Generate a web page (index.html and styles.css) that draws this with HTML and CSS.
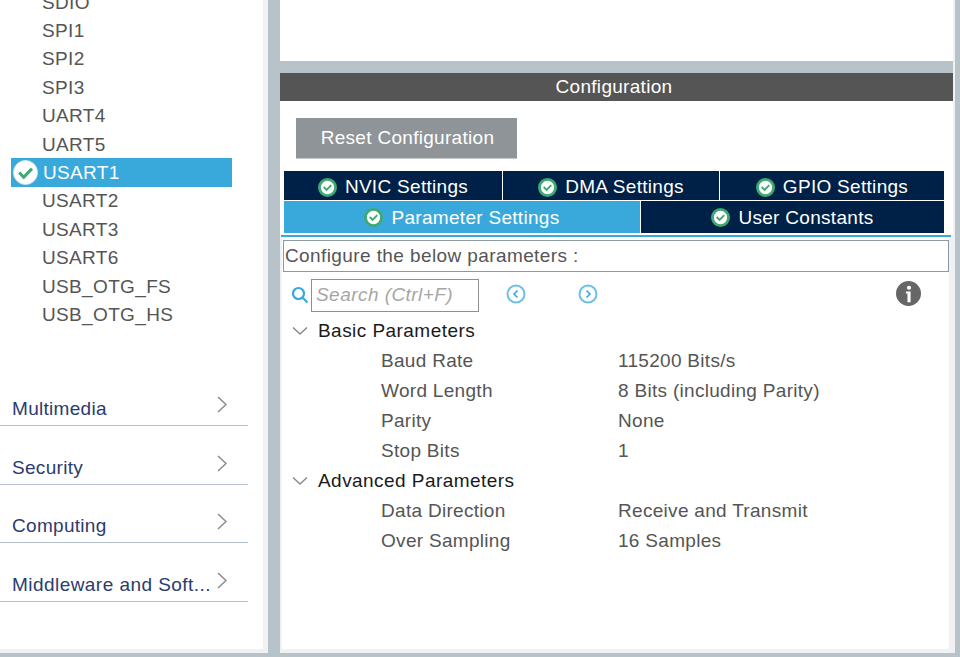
FILE: index.html
```html
<!DOCTYPE html>
<html lang="en">
<head>
    <meta charset="UTF-8">
    <title>Configuration</title>
    <link rel="stylesheet" href="styles.css">
</head>
<body>
<svg class="defs" width="0" height="0">
    <symbol id="ok" viewBox="0 0 20 20">
        <circle cx="10" cy="10" r="8.5" fill="#fff" stroke="#3fa873" stroke-width="3"/>
        <path d="M6 9.5l3 3 5-5" fill="none" stroke="#3fa873" stroke-width="2"/>
    </symbol>
    <symbol id="ok-big" viewBox="0 0 26 26">
        <circle cx="13" cy="13" r="12.5" fill="#fff" stroke="#cfe6dc" stroke-width="1"/>
        <path d="M6.5 13l4.6 5 8.6-9" fill="none" stroke="#3fa873" stroke-width="3.2"/>
    </symbol>
    <symbol id="down" viewBox="0 0 16 10">
        <path d="M1 1.5l7 6.5 7-6.5" fill="none" stroke="#8a8a8a" stroke-width="1.5"/>
    </symbol>
    <symbol id="right" viewBox="0 0 10 17">
        <path d="M1 1l8 7.5-8 7.5" fill="none" stroke="#8a8a8a" stroke-width="1.5"/>
    </symbol>
</svg>

<div class="page">
    <div class="side">
        <div class="side-inner">
            <ul class="periph">
                <li>SDIO</li>
                <li>SPI1</li>
                <li>SPI2</li>
                <li>SPI3</li>
                <li>UART4</li>
                <li>UART5</li>
                <li class="on"><svg class="big-ok"><use href="#ok-big"/></svg>USART1</li>
                <li>USART2</li>
                <li>USART3</li>
                <li>USART6</li>
                <li>USB_OTG_FS</li>
                <li>USB_OTG_HS</li>
            </ul>
            <div class="cat"><span>Multimedia</span><svg class="chev"><use href="#right"/></svg></div>
            <div class="cat"><span>Security</span><svg class="chev"><use href="#right"/></svg></div>
            <div class="cat"><span>Computing</span><svg class="chev"><use href="#right"/></svg></div>
            <div class="cat"><span>Middleware and Soft...</span><svg class="chev"><use href="#right"/></svg></div>
        </div>
    </div>

    <div class="main">
        <div class="top-panel"></div>
        <div class="head">Configuration</div>
        <div class="tabs-area">
            <button class="reset">Reset Configuration</button>
            <div class="tabs tabs-3">
                <div class="tab"><svg class="ok"><use href="#ok"/></svg>NVIC Settings</div>
                <div class="tab"><svg class="ok"><use href="#ok"/></svg>DMA Settings</div>
                <div class="tab"><svg class="ok"><use href="#ok"/></svg>GPIO Settings</div>
            </div>
            <div class="tabs tabs-2">
                <div class="tab active"><svg class="ok"><use href="#ok"/></svg>Parameter Settings</div>
                <div class="tab"><svg class="ok"><use href="#ok"/></svg>User Constants</div>
            </div>
        </div>
        <div class="tab-line"></div>
        <div class="params">
            <div class="hint">Configure the below parameters :</div>
            <div class="tools">
                <svg class="lens" viewBox="0 0 18 18"><circle cx="7.5" cy="7.5" r="5.5" fill="none" stroke="#39a9dc" stroke-width="2.2"/><path d="M11.5 11.5l5 5" stroke="#39a9dc" stroke-width="2.2"/></svg>
                <div class="search">Search (Ctrl+F)</div>
                <svg class="nav nav-prev" viewBox="0 0 20 20"><circle cx="10" cy="10" r="8.5" fill="none" stroke="#6cc0e6" stroke-width="2"/><path d="M11.5 6.5l-3.5 3.5 3.5 3.5" fill="none" stroke="#39a9dc" stroke-width="1.6"/></svg>
                <svg class="nav nav-next" viewBox="0 0 20 20"><circle cx="10" cy="10" r="8.5" fill="none" stroke="#6cc0e6" stroke-width="2"/><path d="M8.5 6.5l3.5 3.5-3.5 3.5" fill="none" stroke="#39a9dc" stroke-width="1.6"/></svg>
                <svg class="info" viewBox="0 0 24 24"><circle cx="12" cy="12" r="12" fill="#666"/><circle cx="12.5" cy="6.5" r="2" fill="#fff"/><path d="M9.5 10h4.5v10.500h-3v-8.500h-1.500z" fill="#fff"/></svg>
            </div>
            <div class="group"><svg class="caret"><use href="#down"/></svg>Basic Parameters</div>
            <div class="row"><span>Baud Rate</span><span>115200 Bits/s</span></div>
            <div class="row"><span>Word Length</span><span>8 Bits (including Parity)</span></div>
            <div class="row"><span>Parity</span><span>None</span></div>
            <div class="row"><span>Stop Bits</span><span>1</span></div>
            <div class="group"><svg class="caret"><use href="#down"/></svg>Advanced Parameters</div>
            <div class="row"><span>Data Direction</span><span>Receive and Transmit</span></div>
            <div class="row"><span>Over Sampling</span><span>16 Samples</span></div>
        </div>
    </div>
</div>
</body>
</html>
```

FILE: styles.css
```css
*{
    padding: 0;
    margin: 0;
    box-sizing: border-box;
    list-style: none;
}
html,body{
    height: 100%;
    overflow: hidden;
}
body{
    background: #b8c2c9;
    font-family: "Liberation Sans", Arial, sans-serif;
    font-size: 19px;
    letter-spacing: 0.3px;
    color: #555;
}
.defs{
    position: absolute;
}
.page{
    display: flex;
    height: 653px;
}

/* left column */
.side{
    width: 268px;
    margin-right: 12px;
    background: #eff1f3;
    padding: 0 5px 4px 0;
}
.side-inner{
    height: 100%;
    background: #fff;
    overflow: hidden;
}
.periph{
    margin: -12.4px 0 39.6px 11px;
    width: 221px;
    letter-spacing: 0.35px;
}
.periph li{
    height: 28.4px;
    line-height: 30.4px;
    padding-left: 31px;
    position: relative;
}
.periph .on{
    height: 29px;
    margin-bottom: -0.6px;
    background: #39a9dc;
    color: #fff;
    padding-left: 32px;
}
.big-ok{
    position: absolute;
    left: 2px;
    top: 2px;
    width: 25px;
    height: 25px;
}
.cat{
    width: 248px;
    height: 58.5px;
    padding: 0 22px 0 12px;
    border-bottom: 1px solid #b3c0d3;
    display: flex;
    align-items: flex-end;
    justify-content: space-between;
    color: #2c3b6e;
    line-height: 33px;
    letter-spacing: 0.3px;
    position: relative;
}
.cat:last-child{
    letter-spacing: 0.45px;
}
.cat span{
    white-space: nowrap;
}
.chev{
    position: absolute;
    left: 217px;
    bottom: 12px;
    width: 10px;
    height: 17px;
}

/* right column */
.main{
    width: 675px;
    padding-right: 2px;
    background: linear-gradient(#b8c2c9, #b8c2c9) left top / 673px 73px no-repeat, #eff1f3;
    display: flex;
    flex-direction: column;
}
.top-panel{
    height: 61px;
    background: #fff;
    margin-bottom: 12px;
}
.head{
    height: 28px;
    line-height: 28px;
    background: #545554;
    color: #fff;
    text-align: center;
    padding-right: 5px;
}
.tabs-area{
    height: 133px;
    background: #fff;
    padding: 17px 9px 0 4px;
}
.reset{
    display: block;
    width: 221px;
    height: 41px;
    margin: 0 0 12px 12px;
    padding-left: 2px;
    background: #8f9499;
    border: 0;
    border-bottom: 1px solid #c3c6c9;
    color: #fff;
    font: inherit;
    letter-spacing: 0.3px;
}
.tabs{
    display: grid;
    column-gap: 1px;
}
.tabs-3{
    grid-template-columns: 218px 216px 224px;
    height: 29px;
    margin-bottom: 1px;
}
.tabs-3 .tab{
    padding-top: 3px;
}
.tabs-2{
    grid-template-columns: 356px 303px;
    height: 32px;
}
.tabs-2 .tab{
    padding-top: 2px;
}
.tabs-2 .ok{
    margin-top: -2px;
}
.tab{
    background: #002147;
    color: #fff;
    display: flex;
    align-items: center;
    justify-content: center;
    letter-spacing: 0.3px;
}
.tab.active{
    background: #39a9dc;
}
.ok{
    width: 19px;
    height: 19px;
    margin-right: 8px;
}
.tab-line{
    height: 3px;
    background: #fff;
    border-top: 1px solid #fff;
    border-bottom: 2px solid #39a9dc;
    margin: 0 2px 0 1px;
}
.params{
    flex: 1;
    margin: 0 4px 4px 2px;
    background: #fff;
    padding: 3px 0 0 1px;
}
.hint{
    height: 32px;
    line-height: 29px;
    border: 1px solid #8c9aa3;
    padding-left: 1px;
    width: 666px;
    letter-spacing: 0.4px;
}
.tools{
    height: 33px;
    margin: 7px 0 4px;
    position: relative;
    padding-left: 28px;
}
.search{
    width: 168px;
    height: 33px;
    line-height: 29px;
    border: 1px solid #8f8f8f;
    padding-left: 4px;
    font-style: italic;
    letter-spacing: 0.45px;
    color: #a6a6a6;
}
.lens{
    position: absolute;
    left: 8px;
    top: 7px;
    width: 18px;
    height: 18px;
}
.nav{
    position: absolute;
    top: 5px;
    width: 20px;
    height: 20px;
}
.nav-prev{
    left: 223px;
}
.nav-next{
    left: 295px;
}
.info{
    position: absolute;
    left: 613px;
    top: 2px;
    width: 25px;
    height: 25px;
}
.group{
    height: 30px;
    line-height: 30px;
    padding-left: 35px;
    color: #1a1a1a;
    letter-spacing: 0.45px;
    position: relative;
}
.caret{
    position: absolute;
    left: 9px;
    top: 10px;
    width: 16px;
    height: 10px;
}
.row{
    height: 30px;
    line-height: 30px;
    padding-left: 98px;
    display: grid;
    grid-template-columns: 237px 1fr;
}
```
